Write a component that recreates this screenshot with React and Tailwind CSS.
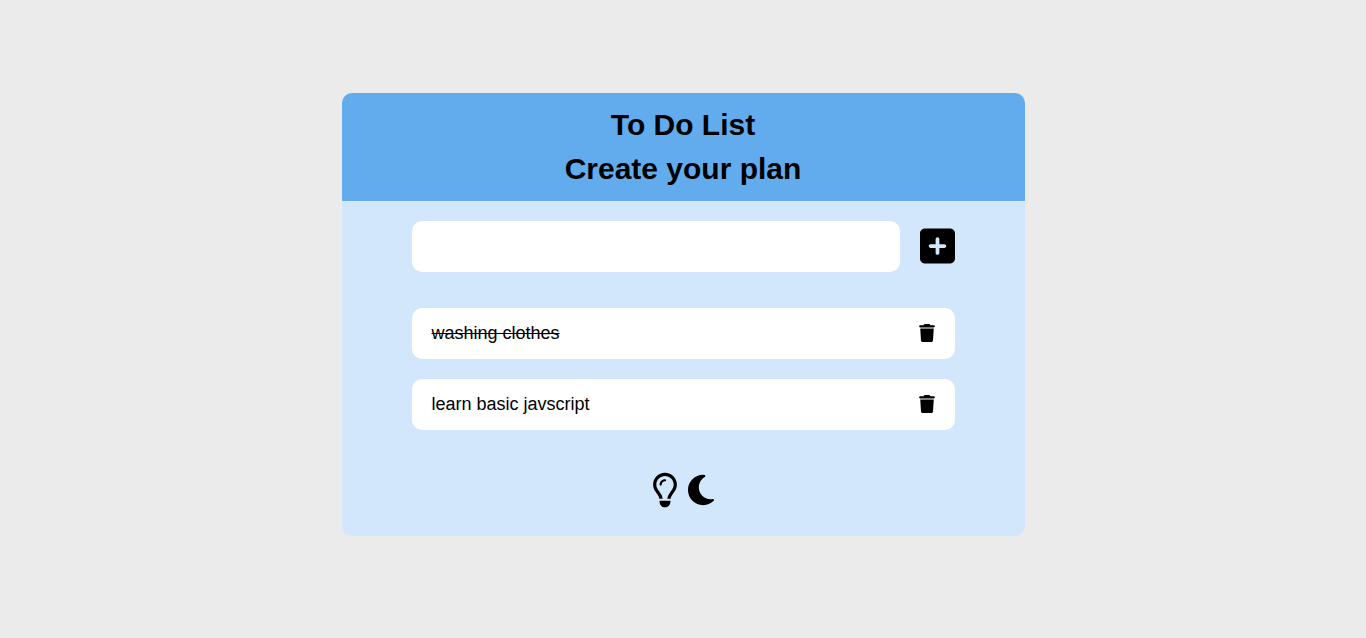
import { useState } from "react";
import { FaSquarePlus, FaTrash, FaRegLightbulb, FaMoon } from "react-icons/fa6";

const initial = [
  { id: 1, text: "washing clothes", done: true },
  { id: 2, text: "learn basic javscript", done: false },
];

export default function App() {
  const [todos, setTodos] = useState(initial);
  const [value, setValue] = useState("");

  const add = (e) => {
    e.preventDefault();
    if (!value.trim()) return;
    setTodos([...todos, { id: Date.now(), text: value, done: false }]);
    setValue("");
  };
  const toggle = (id) =>
    setTodos(todos.map((t) => (t.id === id ? { ...t, done: !t.done } : t)));
  const remove = (id) => setTodos(todos.filter((t) => t.id !== id));

  return (
    <div className="flex min-h-screen flex-col items-center justify-center bg-[#ebebeb] pb-2.5 font-['Liberation_Sans',Arial,sans-serif] text-black">
      <main className="w-1/2 overflow-hidden rounded-[10px] bg-[#d2e7fb]">
        <header className="bg-[#62acee] py-2.5 text-center">
          <h1 className="text-[30px] leading-[44px] font-bold">
            To Do List
            <br />
            Create your plan
          </h1>
        </header>
        <div className="px-[70px] pt-5 pb-7">
          <form onSubmit={add} className="flex items-center gap-5">
            <input
              aria-label="New task"
              value={value}
              onChange={(e) => setValue(e.target.value)}
              className="h-[51px] min-w-0 flex-1 rounded-[10px] bg-white px-5 text-lg outline-none"
            />
            <button type="submit" aria-label="Add task">
              <FaSquarePlus className="h-10 w-[35px]" />
            </button>
          </form>
          <ul className="mt-9 flex flex-col gap-5">
            {todos.map((t) => (
              <li
                key={t.id}
                className="flex h-[51px] items-center justify-between rounded-[10px] bg-white px-5"
              >
                <button
                  type="button"
                  onClick={() => toggle(t.id)}
                  className={t.done ? "text-lg line-through" : "text-lg"}
                >
                  {t.text}
                </button>
                <button type="button" aria-label="Delete task" onClick={() => remove(t.id)}>
                  <FaTrash className="h-[18px] w-4" />
                </button>
              </li>
            ))}
          </ul>
          <div className="mt-[42px] flex items-center justify-center gap-2.5">
            <button type="button" aria-label="Light theme">
              <FaRegLightbulb className="h-9 w-[26px]" />
            </button>
            <button type="button" aria-label="Dark theme">
              <FaMoon className="h-9 w-[26px]" />
            </button>
          </div>
        </div>
      </main>
    </div>
  );
}
